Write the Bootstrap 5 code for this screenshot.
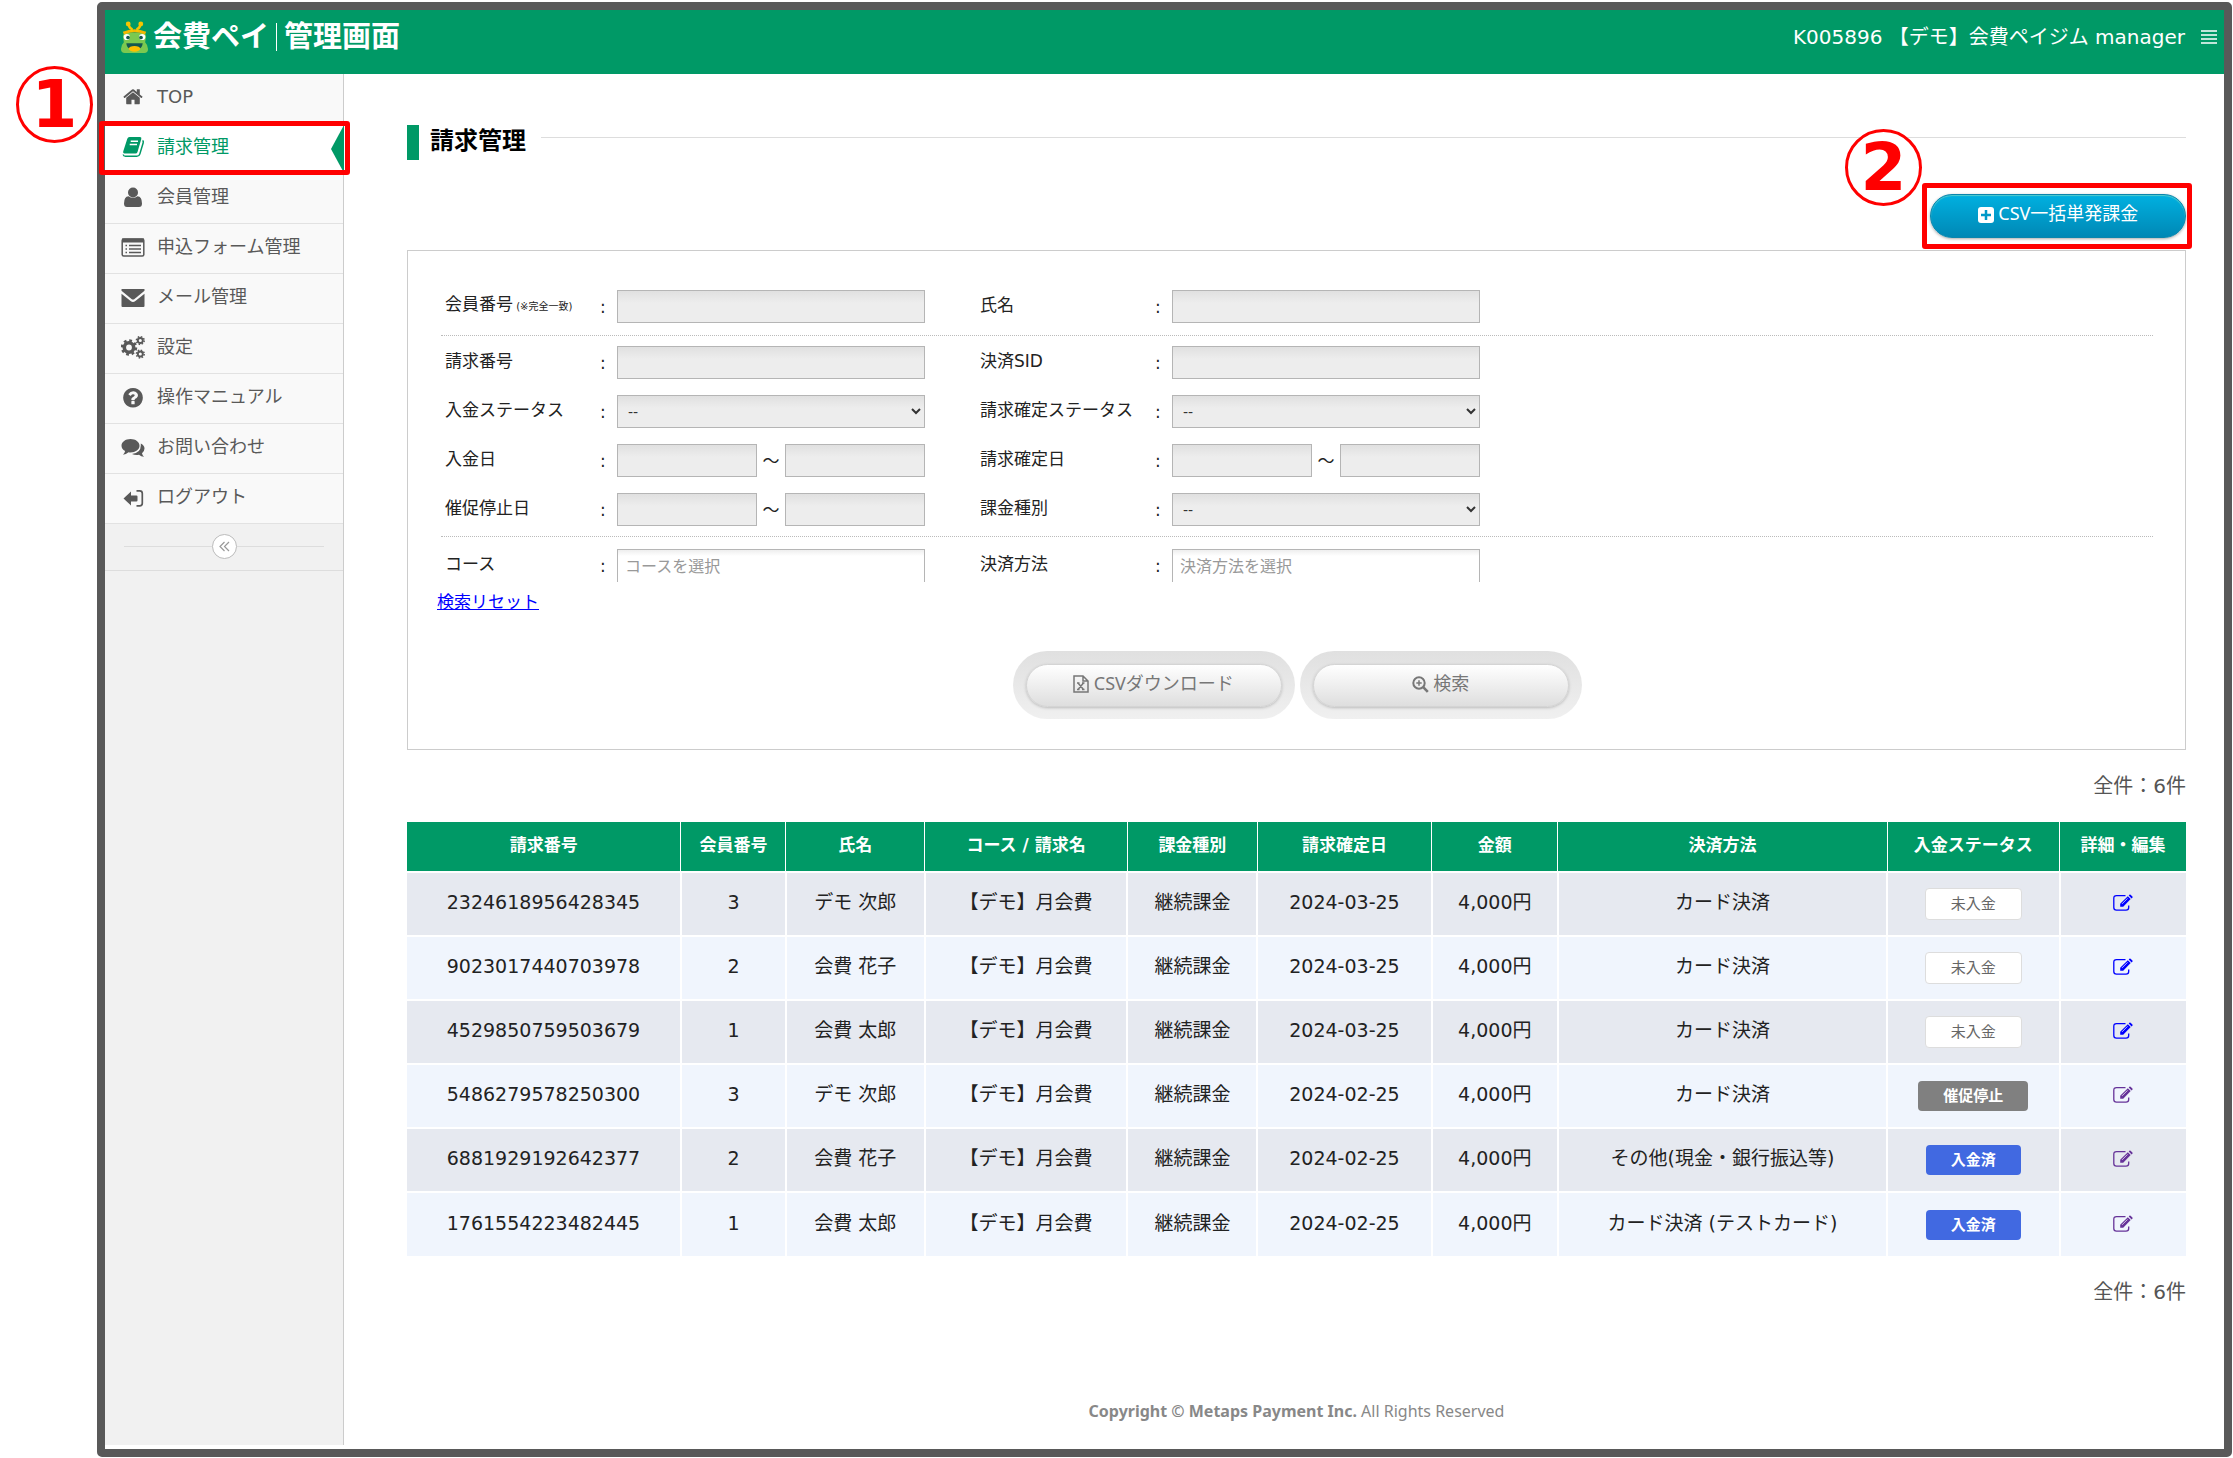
<!DOCTYPE html>
<html lang="ja">
<head>
<meta charset="utf-8">
<meta name="viewport" content="width=device-width, initial-scale=1">
<title>請求管理 | 会費ペイ 管理画面</title>
<link href="https://cdn.jsdelivr.net/npm/bootstrap@5.3.0/dist/css/bootstrap.min.css" rel="stylesheet">
<style>
:root { --green: #009966; }
body { background: #fff; color: #222; font-family: "DejaVu Sans", "Noto Sans CJK JP", sans-serif; font-size: 17px; line-height: 24px; }
.canvas { min-height: 100vh; padding: 2px 1px 1px 97px; }
.frame { border: 8px solid #595959; border-radius: 5px; }
.topbar { background: var(--green); height: 64px; padding: 0 7px 10px 15px; color: #fff; }
.brand { color: #fff; font-size: 29px; font-weight: 700; line-height: 32px; }
.brand-sep { width: 1px; height: 28px; background: #fff; margin: 0 7px; }
.account { font-size: 20px; }
.plain-btn { background: none; border: 0; padding: 0; color: inherit; line-height: 0; }

.sidebar { width: 239px; background: #f1f1f1; border-right: 1px solid #ccc; margin-bottom: 4px; }
.side-item { height: 50px; background: #f9f9f9; border-bottom: 1px solid #e2e2e2; }
.side-item a { display: flex; align-items: center; height: 100%; padding: 0 0 4px 16px; color: #595959; font-size: 18px; text-decoration: none; }
.side-item svg { width: 24px; height: 24px; margin-right: 12px; flex: none; }
.side-item.current { background: #fff; }
.side-item.current a { color: var(--green); }
.side-arrow { width: 13px; height: 48px; right: -1px; top: 1px; background: var(--green); clip-path: polygon(100% 0, 0 50%, 100% 100%); }
.side-foot { height: 47px; border-bottom: 1px solid #ddd; padding: 0 19px 2px; }
.side-foot .rule { height: 1px; background: #ddd; }
.collapse-btn { width: 25px; height: 25px; border: 1px solid #bbb; border-radius: 50%; background: #fff; color: #999; padding: 0; line-height: 0; }

.callout-box { border: 5px solid #f00; border-radius: 3px; pointer-events: none; }
.callout-nav { inset: -3px -7px -2px -6px; z-index: 2; }
.callout-btn { inset: -11px -6px -11px -8px; }
.callout-num { width: 77px; height: 77px; border: 3px solid #f00; border-radius: 50%; color: #f00; background: #fff; font-size: 66px; font-weight: 700; line-height: 71px; text-align: center; z-index: 3; }
.num-one { left: -89px; top: -58px; }
.num-two { right: 264px; top: -65px; }

.content { padding: 51px 38px 0 63px; }
.title-mark { width: 12px; height: 35px; background: var(--green); margin-right: 11px; }
.page-title { font-size: 24px; font-weight: 700; line-height: 30px; color: #000; }
.title-rule { height: 1px; background: #ddd; margin: 0 0 11px 15px; }
.actions { margin-top: 34px; }
.btn-blue { width: 256px; height: 44px; border: 1px solid #0a86ad; border-radius: 22px; padding: 0 0 6px; color: #fff; font-size: 18px; font-family: "Noto Sans", "Noto Sans CJK JP", sans-serif; background: linear-gradient(#00b0e0, #0088b5); box-shadow: inset 0 1px 1px #5cc, 0 1px 3px #aaa; }
.glyph { vertical-align: -3px; }

.search-box { border: 1px solid #ccc; margin-top: 12px; padding: 39px 32px 30px 33px; }
.field-group { display: grid; grid-template-columns: 155px 17px 363px 175px 17px 308px; row-gap: 16px; align-items: center; padding: 0 0 12px 4px; border-bottom: 1px dotted #bbb; margin-bottom: 10px; color: #222; }
.field-group.wide { padding-bottom: 10px; }
.field-group.last { border: 0; margin: 0; padding-top: 2px; padding-bottom: 0; }
.field-group label { margin: 0 0 3px; }
.tiny { font-size: 10px; }
.ctl { width: 308px; height: 33px; border: 1px solid #b5b5b5; border-radius: 0; background: linear-gradient(#e0e0e0, #ededed 12px); padding: 0 10px; font-size: 14px; color: #333; }
.ctl.half { width: 140px; }
.tilde { width: 28px; text-align: center; }
select.ctl { padding: 0 0 0 6px; appearance: auto; }
.ctl.multi { border-bottom: 0; background: linear-gradient(#eee, #fff 6px); padding: 0 7px; font-size: 16px; }
.ctl.multi::placeholder { color: #999; opacity: 1; }
.reset-link { color: #00f; margin-left: -4px; margin-top: 8px; }
.pill { width: 282px; height: 68px; border-radius: 34px; background: linear-gradient(#e0e0e0, #f0f0f0); padding: 13px 13px 12px; }
.pill button { width: 100%; height: 43px; border: 1px solid #d4d4d4; border-radius: 22px; padding: 0 0 6px; background: linear-gradient(#fff, #dedede); color: #777; font-size: 18px; box-shadow: 0 1px 3px #bbb; font-family: "Noto Sans", "Noto Sans CJK JP", sans-serif; }
.pills { gap: 5px; margin-top: 37px; }

.total { font-size: 20px; color: #555; text-align: right; }
.bills { table-layout: fixed; width: 100%; text-align: center; font-size: 19px; color: #222; border-collapse: collapse; }
.bills th { background: var(--green); color: #fff; font-size: 17px; height: 50px; font-weight: 700; padding: 0 0 3px; border-right: 1px solid #fff; }
.bills td { height: 64px; padding: 0 0 4px; border-right: 2px solid #fff; border-top: 2px solid #fff; white-space: nowrap; }
.bills tr > :last-child { border-right: 0; }
.bills tbody tr:nth-child(odd) { background: #e6e9f0; }
.bills tbody tr:nth-child(even) { background: #f0f5fd; }
.bills td.state { padding: 0; }
.c1 { width: 15.4%; } .c2 { width: 5.9%; } .c3 { width: 7.8%; } .c4 { width: 11.4%; } .c5 { width: 7.3%; }
.c6 { width: 9.8%; } .c7 { width: 7.1%; } .c8 { width: 18.5%; } .c9 { width: 9.7%; } .c10 { width: 7.1%; }
.tag { display: inline-block; font-size: 15px; line-height: 20px; padding: 5px 25px; border-radius: 4px; font-weight: 700; color: #fff; }
.tag-open { background: #fff; color: #666; font-weight: 400; border: 1px solid #ddd; }
.tag-stop { background: #808080; }
.tag-paid { background: #4169e1; }
.edit { color: #00f; }
.edit.seen { color: #639; }
.edit svg { display: inline-block; vertical-align: -2px; }
.copyright { font-size: 16px; color: #888; text-align: center; font-family: "Noto Sans", "Noto Sans CJK JP", sans-serif; margin-top: 95px; padding-bottom: 20px; }
</style>
<script src="https://cdn.jsdelivr.net/npm/bootstrap@5.3.0/dist/js/bootstrap.bundle.min.js" defer></script>
</head>
<body>
<svg class="d-none" xmlns="http://www.w3.org/2000/svg">
  <symbol id="i-edit" viewBox="0 0 20 17"><path d="M12.500 1.700H3.500Q.8 1.700.8 4.300v9.200q0 2.600 2.700 2.600h9.500q2.700 0 2.700-2.600v-2" fill="none" stroke="currentColor" stroke-width="1.300"/><path d="M7.200 9.700 14.800 2.200l2.900 2.900-7.500 7.600H7.200zM15.700 1.400l.7-.7q.6-.4 1.200.1l1.800 1.800q.5.600 0 1.200l-.8.700z" fill="currentColor"/><path d="m9 9.900 5.500-5.500" stroke="#fff" stroke-width=".7"/></symbol>
</svg>
<div class="canvas d-flex">
<div class="frame flex-grow-1 d-flex flex-column">
  <header class="topbar d-flex align-items-center justify-content-between">
    <a href="#" class="brand d-flex align-items-center text-decoration-none">
      <svg class="me-1" width="29" height="33" viewBox="0 0 30 34" aria-hidden="true"><path d="M3 16q0-4 5-4h14q5 0 5 4l-1 6q3 3 3 7 0 4-4 4H5q-4 0-4-4 0-4 3-7z" fill="#7bc950"/><circle cx="7" cy="16.500" r="3.200" fill="#fff"/><circle cx="23" cy="16.500" r="3.200" fill="#fff"/><circle cx="8.300" cy="17" r="1.900" fill="#14584f"/><circle cx="21.700" cy="17" r="1.900" fill="#14584f"/><path d="M3.500 12.500Q15 7.500 26.500 12.500" stroke="#f6b800" stroke-width="3" fill="none"/><path d="M9 3q0 4 3 5v3M21 3q0 4-3 5v3" fill="none" stroke="#f6c500" stroke-width="2.500"/><circle cx="8.500" cy="3" r="2.500" fill="#f6c500"/><circle cx="21.500" cy="3" r="2.500" fill="#f6c500"/><path d="M6.500 23h17q-.5 7-8.500 7t-8.500-7z" fill="#14584f"/><ellipse cx="15" cy="28.700" rx="6" ry="3" fill="#fdbf00"/></svg>
      <span>会費ペイ</span><span class="brand-sep"></span><span>管理画面</span>
    </a>
    <div class="d-flex align-items-center">
      <span class="account">K005896 【デモ】会費ペイジム manager</span>
      <button class="plain-btn ms-3" type="button" aria-label="メニュー"><svg width="16" height="14" viewBox="0 0 16 14"><path d="M0 1h16M0 5h16M0 9h16M0 13h16" stroke="#fff" stroke-width="1.500"/></svg></button>
    </div>
  </header>
  <div class="d-flex flex-grow-1">
    <nav class="sidebar flex-shrink-0">
      <ul class="list-unstyled m-0">
        <li class="side-item"><a href="#"><svg viewBox="-120 -100 2032 2032"><path fill="currentColor" d="M1472 992v480q0 26-19 45t-45 19h-384v-384h-256v384h-384q-26 0-45-19t-19-45v-480q0-1 .5-3t.5-3l575-474 575 474q1 2 1 6zm223-69l-62 74q-8 9-21 11h-3q-13 0-21-7l-692-577-692 577q-12 8-24 7-13-2-21-11l-62-74q-8-10-7-23.500t11-21.500l719-599q32-26 76-26t76 26l244 204v-195q0-14 9-23t23-9h192q14 0 23 9t9 23v408l219 182q10 8 11 21.500t-7 23.500z"/></svg>TOP</a></li>
        <li class="side-item current position-relative"><a href="#"><svg viewBox="0 0 24 24"><path d="M21.500 5.500q1.200.6.700 2.300l-3.400 11.300q-.7 2.200-3 2.200H4.500q-2 0-2.300-1.800" fill="none" stroke="currentColor" stroke-width="1.500"/><path d="M8.500 2H19q1.800 0 1.300 2l-3.800 13q-.5 1.500-2 1.500H3.500q-1.800 0-1.300-2L6.300 3.700Q6.800 2 8.500 2z" fill="currentColor"/><path d="M9.700 6.200h7.300M8.700 9.500h7.300" stroke="#fff" stroke-width="1.500"/></svg>請求管理</a>
          <span class="side-arrow position-absolute"></span>
          <span class="callout-box callout-nav position-absolute"></span>
          <span class="callout-num num-one position-absolute">1</span></li>
        <li class="side-item"><a href="#"><svg viewBox="0 0 24 24" fill="currentColor"><circle cx="12" cy="7.500" r="5"/><path d="M7.500 11.200q4.500 3.300 9 0 4.500.3 4.500 7.300 0 3.500-3 3.500H6q-3 0-3-3.500 0-7 4.500-7.300z"/></svg>会員管理</a></li>
        <li class="side-item"><a href="#"><svg viewBox="0 0 24 24"><rect x="1.200" y="4" width="21.600" height="17" rx="1.500" fill="none" stroke="currentColor" stroke-width="1.500"/><path d="M4.500 10.500h1.500M4.500 14h1.500M4.500 17.500h1.500M8 10.500h12M8 14h12M8 17.500h12" stroke="currentColor" stroke-width="1.600"/><path d="M1 5.500h22" stroke="currentColor" stroke-width="4"/></svg>申込フォーム管理</a></li>
        <li class="side-item"><a href="#"><svg viewBox="0 0 24 24"><path d="M.5 4.500Q.5 4 1 4h22q.5 0 .5.500v1.300L13.500 14q-1.500 1.200-3 0L.5 5.800z" fill="currentColor"/><path d="M.5 8.800 9.600 16q2.400 1.800 4.800 0l9.100-7.200V21q0 1-1 1h-21q-1 0-1-1z" fill="currentColor"/></svg>メール管理</a></li>
        <li class="side-item"><a href="#"><svg viewBox="0 0 24 24" fill="none" stroke="currentColor"><circle cx="8" cy="12.500" r="4.700" stroke-width="3.600"/><circle cx="8" cy="12.500" r="7" stroke-width="2.500" stroke-dasharray="2.750 2.750"/><circle cx="19.300" cy="5.500" r="2.500" stroke-width="1.900"/><circle cx="19.300" cy="5.500" r="3.900" stroke-width="1.500" stroke-dasharray="1.530 1.530"/><circle cx="19.300" cy="19" r="2.500" stroke-width="1.900"/><circle cx="19.300" cy="19" r="3.900" stroke-width="1.500" stroke-dasharray="1.530 1.530"/></svg>設定</a></li>
        <li class="side-item"><a href="#"><svg viewBox="0 -100 1872 1872"><path transform="translate(40 0)" fill="currentColor" d="M1024 1376v-192q0-14-9-23t-23-9h-192q-14 0-23 9t-9 23v192q0 14 9 23t23 9h192q14 0 23-9t9-23zm256-672q0-88-55.500-163t-138.500-116-170-41q-243 0-371 213-15 24 8 42l132 100q7 6 19 6 16 0 25-12 53-68 86-92 34-24 86-24 48 0 85.500 26t37.500 59q0 38-20 61t-68 45q-63 28-115.500 86.500t-52.500 125.500v36q0 14 9 23t23 9h192q14 0 23-9t9-23q0-19 21.500-49.500t54.500-49.500q32-18 49-28.500t46-35 44.500-48 28-60.500 12.500-81zm384 192q0 209-103 385.500t-279.500 279.500-385.500 103-385.500-103-279.500-279.500-103-385.500 103-385.500 279.500-279.500 385.500-103 385.500 103 279.500 279.500 103 385.500z"/></svg>操作マニュアル</a></li>
        <li class="side-item"><a href="#"><svg viewBox="0 0 24 24" fill="currentColor"><path d="M9.500 4c5 0 9 2.900 9 6.700s-4 6.700-9 6.700q-1 0-2-.2Q5 19.200 2 19.700q1.700-1.500 2.100-3.700Q.5 14 .5 10.700C.5 6.900 4.500 4 9.500 4z"/><path d="M19.800 8.500q3.700 1.900 3.700 5 0 2.700-2.500 4.700.4 2.100 2 3.600-3-.2-5-2-4 .7-7-.9 8.800-.8 8.800-8.400 0-1 0-2z"/></svg>お問い合わせ</a></li>
        <li class="side-item"><a href="#"><svg viewBox="0 0 24 24"><path d="m2.500 13.500 7.500-7v4h5.500q1 0 1 1v4q0 1-1 1H10v4z" fill="currentColor"/><path d="M15.500 5.800h3.200q2.600 0 2.600 2.600v9.800q0 2.600-2.600 2.600h-3.200" fill="none" stroke="currentColor" stroke-width="1.700"/></svg>ログアウト</a></li>
      </ul>
      <div class="side-foot d-flex align-items-center">
        <span class="rule flex-grow-1"></span><button class="collapse-btn" type="button" aria-label="メニューを閉じる"><svg width="11" height="11" viewBox="0 0 11 11"><path d="M5.500 1 1 5.500 5.500 10M10 1 5.500 5.500 10 10" fill="none" stroke="currentColor" stroke-width="1.200"/></svg></button><span class="rule flex-grow-1"></span>
      </div>
    </nav>

    <main class="content flex-grow-1 d-flex flex-column">
      <div class="d-flex align-items-center">
        <span class="title-mark"></span>
        <h1 class="page-title mb-1">請求管理</h1>
        <span class="title-rule flex-grow-1"></span>
      </div>
      <div class="actions d-flex justify-content-end">
        <div class="position-relative">
          <button class="btn-blue" type="button"><svg class="glyph" width="16" height="16" viewBox="0 0 16 16"><rect width="16" height="16" rx="3" fill="#fff"/><path d="M8 3v10M3 8h10" stroke="#0099c8" stroke-width="2.500"/></svg> CSV一括単発課金</button>
          <span class="callout-box callout-btn position-absolute"></span>
          <span class="callout-num num-two position-absolute">2</span>
        </div>
      </div>

      <form class="search-box">
        <div class="field-group">
          <label for="f1">会員番号<span class="tiny"> (※完全一致)</span></label><span>:</span><div><input id="f1" class="ctl d-block" type="text"></div>
          <label for="f2">氏名</label><span>:</span><input id="f2" class="ctl d-block" type="text">
        </div>
        <div class="field-group wide">
          <label for="f3">請求番号</label><span>:</span><div><input id="f3" class="ctl d-block" type="text"></div>
          <label for="f4">決済SID</label><span>:</span><input id="f4" class="ctl d-block" type="text">
          <label for="f5">入金ステータス</label><span>:</span><div><select id="f5" class="ctl d-block"><option>--</option></select></div>
          <label for="f6">請求確定ステータス</label><span>:</span><select id="f6" class="ctl d-block"><option>--</option></select>
          <label for="f7">入金日</label><span>:</span><div class="d-flex align-items-center"><input id="f7" class="ctl half" type="text"><span class="tilde">～</span><input class="ctl half" type="text" aria-label="入金日 終了"></div>
          <label for="f8">請求確定日</label><span>:</span><div class="d-flex align-items-center"><input id="f8" class="ctl half" type="text"><span class="tilde">～</span><input class="ctl half" type="text" aria-label="請求確定日 終了"></div>
          <label for="f9">催促停止日</label><span>:</span><div class="d-flex align-items-center"><input id="f9" class="ctl half" type="text"><span class="tilde">～</span><input class="ctl half" type="text" aria-label="催促停止日 終了"></div>
          <label for="f10">課金種別</label><span>:</span><select id="f10" class="ctl d-block"><option>--</option></select>
        </div>
        <div class="field-group last">
          <label for="f11">コース</label><span>:</span><div><input id="f11" class="ctl multi d-block" type="text" placeholder="コースを選択"></div>
          <label for="f12">決済方法</label><span>:</span><input id="f12" class="ctl multi d-block" type="text" placeholder="決済方法を選択">
        </div>
        <a href="#" class="reset-link d-inline-block">検索リセット</a>
        <div class="pills d-flex justify-content-center">
          <div class="pill"><button type="button"><svg class="glyph" width="16" height="18" viewBox="0 0 16 18" fill="none" stroke="currentColor" stroke-width="1.500"><path d="M1 1h9l5 5v11H1zM10 1v5h5M5 8l5.500 6.500M10.500 8 5 14.500M4 8h2.500M9 8h2.500M4 14.500h2.500M9 14.500h2.500"/></svg> CSVダウンロード</button></div>
          <div class="pill"><button type="button"><svg class="glyph" width="17" height="17" viewBox="0 0 17 17" fill="none" stroke="currentColor"><circle cx="7" cy="7" r="5.700" stroke-width="2"/><path d="M7 4.300v5.400M4.300 7h5.400" stroke-width="1.500"/><path d="m11.200 11.200 4.600 4.600" stroke-width="2.600"/></svg> 検索</button></div>
        </div>
      </form>

      <div class="total my-4">全件：6件</div>
      <table class="bills">
        <thead><tr><th class="c1">請求番号</th><th class="c2">会員番号</th><th class="c3">氏名</th><th class="c4">コース / 請求名</th><th class="c5">課金種別</th><th class="c6">請求確定日</th><th class="c7">金額</th><th class="c8">決済方法</th><th class="c9">入金ステータス</th><th class="c10">詳細・編集</th></tr></thead>
        <tbody>
          <tr><td>2324618956428345</td><td>3</td><td>デモ 次郎</td><td>【デモ】月会費</td><td>継続課金</td><td>2024-03-25</td><td>4,000円</td><td>カード決済</td><td class="state"><span class="tag tag-open">未入金</span></td><td><a href="#" class="edit" aria-label="編集"><svg width="20" height="17"><use href="#i-edit"/></svg></a></td></tr>
          <tr><td>9023017440703978</td><td>2</td><td>会費 花子</td><td>【デモ】月会費</td><td>継続課金</td><td>2024-03-25</td><td>4,000円</td><td>カード決済</td><td class="state"><span class="tag tag-open">未入金</span></td><td><a href="#" class="edit" aria-label="編集"><svg width="20" height="17"><use href="#i-edit"/></svg></a></td></tr>
          <tr><td>4529850759503679</td><td>1</td><td>会費 太郎</td><td>【デモ】月会費</td><td>継続課金</td><td>2024-03-25</td><td>4,000円</td><td>カード決済</td><td class="state"><span class="tag tag-open">未入金</span></td><td><a href="#" class="edit" aria-label="編集"><svg width="20" height="17"><use href="#i-edit"/></svg></a></td></tr>
          <tr><td>5486279578250300</td><td>3</td><td>デモ 次郎</td><td>【デモ】月会費</td><td>継続課金</td><td>2024-02-25</td><td>4,000円</td><td>カード決済</td><td class="state"><span class="tag tag-stop">催促停止</span></td><td><a href="#" class="edit seen" aria-label="編集"><svg width="20" height="17"><use href="#i-edit"/></svg></a></td></tr>
          <tr><td>6881929192642377</td><td>2</td><td>会費 花子</td><td>【デモ】月会費</td><td>継続課金</td><td>2024-02-25</td><td>4,000円</td><td>その他(現金・銀行振込等)</td><td class="state"><span class="tag tag-paid">入金済</span></td><td><a href="#" class="edit seen" aria-label="編集"><svg width="20" height="17"><use href="#i-edit"/></svg></a></td></tr>
          <tr><td>1761554223482445</td><td>1</td><td>会費 太郎</td><td>【デモ】月会費</td><td>継続課金</td><td>2024-02-25</td><td>4,000円</td><td>カード決済 (テストカード)</td><td class="state"><span class="tag tag-paid">入金済</span></td><td><a href="#" class="edit seen" aria-label="編集"><svg width="20" height="17"><use href="#i-edit"/></svg></a></td></tr>
        </tbody>
      </table>
      <div class="total mt-4">全件：6件</div>
      <footer class="copyright"><b>Copyright © Metaps Payment Inc.</b> All Rights Reserved</footer>
    </main>
  </div>
</div>
</div>
</body>
</html>
